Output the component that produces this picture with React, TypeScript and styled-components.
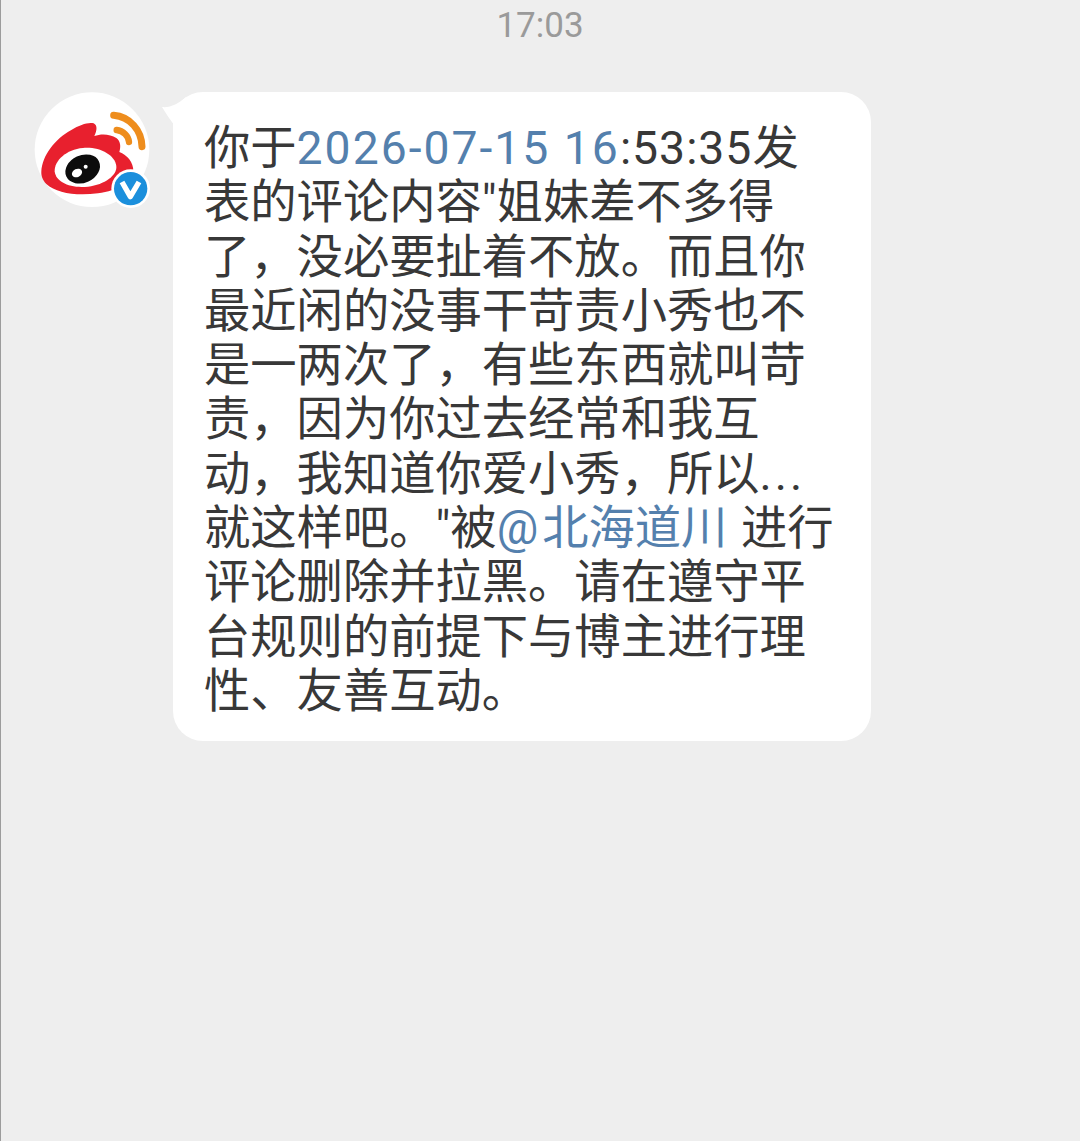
import styled, { createGlobalStyle } from 'styled-components'

const GlobalStyle = createGlobalStyle`
  html, body {
    margin: 0;
    padding: 0;
    background-color: #eeeeee;
  }
`

const Page = styled.div`
  box-sizing: border-box;
  width: 1080px;
  height: 1141px;
  overflow: hidden;
  background-color: #eeeeee;
  border-left: 1px solid #9c9c9c;
  font-family: Roboto, "Noto Sans CJK SC", sans-serif;
`

const Time = styled.div`
  height: 92px;
  padding-top: 5px;
  box-sizing: border-box;
  text-align: center;
  font-size: 35px;
  line-height: 42px;
  color: #9a9a9a;
  margin-left: -1px;
`

const MessageRow = styled.div`
  display: flex;
  align-items: flex-start;
  padding-left: 32px;
  gap: 22px;
`

const Avatar = styled.svg`
  width: 118px;
  height: 118px;
  flex: none;
`

const Bubble = styled.div`
  position: relative;
  box-sizing: border-box;
  width: 698px;
  height: 649px;
  padding: 29px 0 0 31px;
  background-color: #ffffff;
  border-radius: 30px;
  color: #383838;
  font-size: 46.3px;
  line-height: 54.3px;
`

const Tail = styled.svg`
  position: absolute;
  left: -11px;
  top: 5px;
  width: 24px;
  height: 40px;
`

const Line = styled.div`
  white-space: nowrap;
`

const Link = styled.span`
  color: #5480ad;
`

// wider tracking for the latin runs mixed into the message
const Spaced = styled.span<{ $gap: number }>`
  letter-spacing: ${(p) => p.$gap}px;
`

const WeiboAvatar = () => (
  <Avatar viewBox="40 32 354 354">
    <circle cx="217" cy="205" r="172" fill="#ffffff" />
    <path
      d="M65 270C68 223 105 173 155 146C180 131 205 122 222 126C234 132 232 148 224 164C245 156 272 158 290 170C303 180 304 196 299 212C322 220 342 243 341 270C338 303 295 328 235 336C170 344 110 336 80 308C70 298 64 286 65 270Z"
      fill="#e8202e"
    />
    <path
      d="M105 270C104 238 140 204 190 200C240 196 285 220 290 254C293 282 255 310 205 316C150 322 108 302 105 270Z"
      fill="#ffffff"
    />
    <ellipse cx="189" cy="263" rx="54" ry="41" transform="rotate(-25 189 263)" fill="#0c0c0c" />
    <ellipse cx="172" cy="275" rx="16" ry="12" transform="rotate(-25 172 275)" fill="#ffffff" />
    <circle cx="198" cy="256" r="6" fill="#ffffff" />
    <path d="M282 102C330 106 366 146 367 196" fill="none" stroke="#ee8d1d" strokeWidth="21" strokeLinecap="round" />
    <path d="M291 146C310 148 327 164 328 182" fill="none" stroke="#ee8d1d" strokeWidth="19" strokeLinecap="round" />
    <circle cx="333" cy="322" r="58" fill="#ffffff" />
    <circle cx="333" cy="322" r="50" fill="#1b8fdc" />
    <path d="M307 302L332 346L358 302" fill="none" stroke="#ffffff" strokeWidth="16" strokeLinejoin="round" />
  </Avatar>
)

export default function App() {
  return (
    <Page>
      <GlobalStyle />
      <Time>17:03</Time>
      <MessageRow>
        <WeiboAvatar />
        <Bubble>
          <Tail viewBox="0 0 24 40">
            <path d="M0 10C8 11 16 7 24 0V40C14 32 6 20 0 10Z" fill="#ffffff" />
          </Tail>
          <Line>
            你于<Link><Spaced $gap={2}>2026-07-15 16</Spaced></Link><Spaced $gap={1}>:53:35</Spaced>发
          </Line>
          <Line>表的评论内容"姐妹差不多得</Line>
          <Line>了，没必要扯着不放。而且你</Line>
          <Line>最近闲的没事干苛责小秀也不</Line>
          <Line>是一两次了，有些东西就叫苛</Line>
          <Line>责，因为你过去经常和我互</Line>
          <Line>动，我知道你爱小秀，所以<Spaced $gap={3}>...</Spaced></Line>
          <Line>
            就这样吧。"被<Link><Spaced $gap={4}>@</Spaced>北海道川</Link><Spaced $gap={2}> </Spaced>进行
          </Line>
          <Line>评论删除并拉黑。请在遵守平</Line>
          <Line>台规则的前提下与博主进行理</Line>
          <Line>性、友善互动。</Line>
        </Bubble>
      </MessageRow>
    </Page>
  )
}
